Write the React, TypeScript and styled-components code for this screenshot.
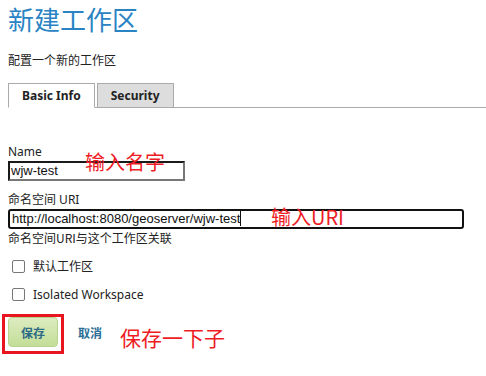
import styled, { createGlobalStyle } from "styled-components";

const GlobalStyle = createGlobalStyle`
  body {
    margin: 0;
    background: #ffffff;
    font-family: "Noto Sans", "Liberation Sans", "Noto Sans CJK SC", sans-serif;
    color: #222;
  }
`;

const Page = styled.div`
  position: relative;
  width: 486px;
  height: 376px;
  padding: 0 8px;
  box-sizing: border-box;
  overflow: hidden;
`;

const Title = styled.h1`
  margin: 0;
  padding-top: 2px;
  font-size: 26px;
  line-height: 34px;
  font-weight: normal;
  color: #2a84c4;
  font-family: "Noto Sans CJK SC", sans-serif;
`;

const Subtitle = styled.p`
  margin: 16px 0 0;
  font-size: 12px;
  line-height: 16px;
  font-family: "Noto Sans CJK SC", sans-serif;
`;

const Tabs = styled.div`
  display: flex;
  align-items: flex-end;
  margin: 14px -8px 0 0;
  border-bottom: 1px solid #aaaaaa;
  height: 25px;
`;

const Tab = styled.div<{ $active?: boolean }>`
  height: ${({ $active }) => ($active ? "25px" : "24px")};
  margin-bottom: ${({ $active }) => ($active ? "-1px" : "0")};
  padding: 0 13px;
  margin-right: 2px;
  box-sizing: border-box;
  display: flex;
  align-items: center;
  font-size: 12px;
  font-weight: bold;
  color: #222;
  background: ${({ $active }) => ($active ? "#ffffff" : "#dddddd")};
  border: 1px solid #aaaaaa;
  border-bottom: ${({ $active }) => ($active ? "1px solid #ffffff" : "none")};
`;

const Form = styled.div`
  display: flex;
  flex-direction: column;
  padding-top: 37px;
`;

const Label = styled.label`
  font-size: 12px;
  line-height: 14px;
  font-family: "Noto Sans", "Noto Sans CJK SC", sans-serif;
`;

const NameInput = styled.div`
  margin-top: 2px;
  width: 177px;
  height: 20px;
  box-sizing: border-box;
  border-top: 2px solid #1a1a1a;
  border-left: 2px solid #1a1a1a;
  border-right: 2px solid #777;
  border-bottom: 2px solid #777;
  font-family: "Liberation Sans", sans-serif;
  font-size: 13px;
  line-height: 16px;
  padding-left: 1px;
  color: #111;
`;

const UriInput = styled.div`
  margin-top: 2px;
  width: 456px;
  height: 20px;
  box-sizing: border-box;
  border: 2px solid #111;
  border-radius: 3px;
  font-family: "Liberation Sans", sans-serif;
  font-size: 13px;
  line-height: 16px;
  padding-left: 2px;
  color: #111;
`;

const Caret = styled.span`
  display: inline-block;
  width: 1px;
  height: 15px;
  background: #111;
  vertical-align: -3px;
`;

const Help = styled.div`
  font-size: 12px;
  line-height: 16px;
  margin-top: 1px;
  font-family: "Noto Sans CJK SC", sans-serif;
`;

const CheckRow = styled.div<{ $first?: boolean }>`
  display: flex;
  align-items: center;
  gap: 8px;
  padding-left: 4px;
  margin-top: ${({ $first }) => ($first ? "6px" : "0")};
  height: 28px;
  font-size: 12px;
  font-family: "Noto Sans", "Noto Sans CJK SC", sans-serif;
`;

const Box = styled.span`
  width: 11px;
  height: 11px;
  border: 1px solid #777;
  border-radius: 2px;
  background: #fff;
`;

const Buttons = styled.div`
  display: flex;
  align-items: center;
  gap: 20px;
  margin-top: 9px;
`;

const SaveButton = styled.div`
  width: 50px;
  height: 30px;
  box-sizing: border-box;
  border: 1px solid #b7d38c;
  border-radius: 4px;
  background: linear-gradient(#dcecc0, #c4de98);
  display: flex;
  align-items: center;
  justify-content: center;
  font-size: 12px;
  font-weight: bold;
  color: #2d6a86;
  font-family: "Noto Sans CJK SC", sans-serif;
`;

const CancelLink = styled.span`
  font-size: 12px;
  font-weight: bold;
  color: #2a6f96;
  font-family: "Noto Sans CJK SC", sans-serif;
`;

const Highlight = styled.div`
  position: absolute;
  left: 2px;
  top: 314px;
  width: 62px;
  height: 40px;
  box-sizing: border-box;
  border: 3px solid #e8141e;
`;

const Note = styled.span<{ $x: number; $y: number; $size: number }>`
  position: absolute;
  left: ${({ $x }) => $x}px;
  top: ${({ $y }) => $y}px;
  font-size: ${({ $size }) => $size}px;
  line-height: 1;
  color: #ee1c25;
  font-family: "Noto Sans CJK SC", sans-serif;
  white-space: nowrap;
`;

export default function App() {
  return (
    <>
      <GlobalStyle />
      <Page>
        <Title>新建工作区</Title>
        <Subtitle>配置一个新的工作区</Subtitle>
        <Tabs>
          <Tab $active>Basic Info</Tab>
          <Tab>Security</Tab>
        </Tabs>
        <Form>
          <Label>Name</Label>
          <NameInput>wjw-test</NameInput>
          <Label style={{ marginTop: 12 }}>命名空间 URI</Label>
          <UriInput>
            http://localhost:8080/geoserver/wjw-test
            <Caret />
          </UriInput>
          <Help>命名空间URI与这个工作区关联</Help>
          <CheckRow $first>
            <Box />
            默认工作区
          </CheckRow>
          <CheckRow>
            <Box />
            Isolated Workspace
          </CheckRow>
          <Buttons>
            <SaveButton>保存</SaveButton>
            <CancelLink>取消</CancelLink>
          </Buttons>
        </Form>
        <Highlight />
        <Note $x={85} $y={152} $size={20}>输入名字</Note>
        <Note $x={271} $y={207} $size={20}>输入URI</Note>
        <Note $x={120} $y={327} $size={21}>保存一下子</Note>
      </Page>
    </>
  );
}
